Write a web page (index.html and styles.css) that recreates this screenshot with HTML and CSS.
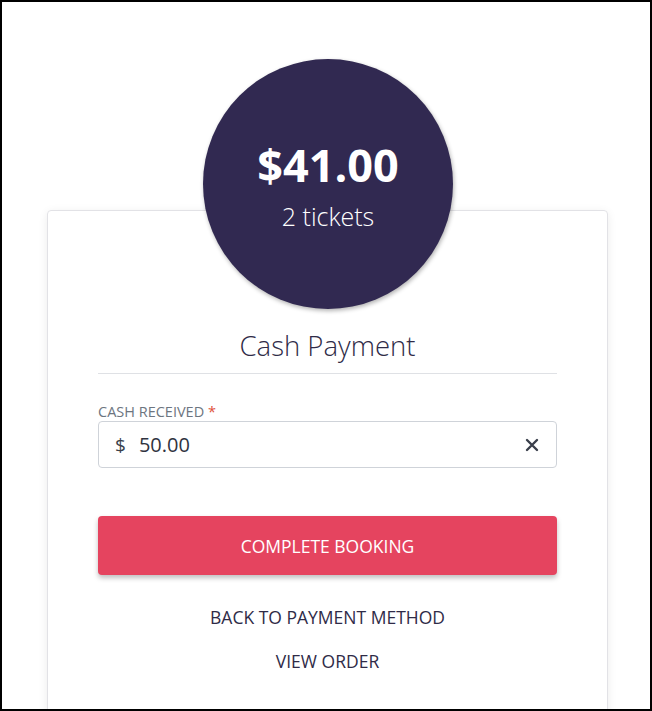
FILE: index.html
```html
<!DOCTYPE html>
<html lang="en">
<head>
    <meta charset="UTF-8">
    <meta name="viewport" content="width=device-width, initial-scale=1.0">
    <title>Cash Payment</title>
    <link rel="stylesheet" href="styles.css">
</head>
<body>
    <div class="frame">
        <div class="total-badge">
            <div class="total-amount">$41.00</div>
            <div class="total-count">2 tickets</div>
        </div>
        <div class="payment-card">
            <h2 class="payment-title">Cash Payment</h2>
            <label class="field-label" for="cash_received">Cash Received <span class="required">*</span></label>
            <div class="field-box">
                <span class="field-prefix">$</span>
                <input type="text" id="cash_received" value="50.00">
                <button class="field-clear" aria-label="Clear">
                    <svg width="14" height="14" viewBox="0 0 14 14"><path d="M2 2 L12 12 M12 2 L2 12" stroke="#3a3f4b" stroke-width="2.4" stroke-linecap="round"/></svg>
                </button>
            </div>
            <button class="primary-btn">Complete Booking</button>
            <a class="text-link" href="#">Back to Payment Method</a>
            <a class="text-link" href="#">View Order</a>
        </div>
    </div>
</body>
</html>
```

FILE: styles.css
```css
body {
    margin: 0;
    font-family: 'Open Sans', sans-serif;
    background-color: #fff;
    color: #2f2b47;
}
.frame {
    height: 711px;
    box-sizing: border-box;
    border: 2px solid #000;
    overflow: hidden;
    padding-top: 57px;
}
.total-badge {
    position: relative;
    z-index: 1;
    width: 250px;
    height: 250px;
    box-sizing: border-box;
    padding-top: 78px;
    border-radius: 50%;
    background-color: #312951;
    box-shadow: 1px 2px 4px rgba(0, 0, 0, 0.3);
    margin: 0 0 -99px 201px;
    display: flex;
    flex-direction: column;
    align-items: center;
    color: #fff;
}
.total-amount {
    font-size: 45px;
    font-weight: 700;
    line-height: 56px;
}
.total-count {
    font-size: 25px;
    font-weight: 300;
    line-height: 34px;
    margin-top: 6px;
}
.payment-card {
    width: 561px;
    height: 560px;
    box-sizing: border-box;
    margin-left: 45px;
    border: 1px solid #e2e2e6;
    border-radius: 4px;
    box-shadow: 0 2px 10px rgba(0, 0, 0, 0.08);
    padding: 116px 50px 0;
    display: flex;
    flex-direction: column;
}
.payment-title {
    margin: 0 0 28px;
    font-size: 27.5px;
    font-weight: 300;
    line-height: 38px;
    text-align: center;
    padding-bottom: 8px;
    border-bottom: 1px solid #dfe1e5;
    color: #2f2b47;
}
.field-label {
    font-size: 14.5px;
    line-height: 19px;
    text-transform: uppercase;
    color: #6d7580;
}
.required {
    color: #e0503a;
}
.field-box {
    display: flex;
    align-items: center;
    height: 47px;
    box-sizing: border-box;
    border: 1px solid #cfd3d9;
    border-radius: 4px;
    padding: 0 14px 0 16px;
    margin-bottom: 48px;
}
.field-prefix {
    font-size: 19px;
    color: #3a3f4b;
    margin-right: 13px;
}
.field-box input {
    flex: 1;
    border: none;
    outline: none;
    font-family: inherit;
    font-size: 20px;
    color: #2f3340;
    padding: 0;
    background: transparent;
}
.field-clear {
    border: none;
    background: none;
    padding: 0;
    width: 20px;
    height: 20px;
    display: flex;
    align-items: center;
    justify-content: center;
    cursor: pointer;
}
.primary-btn {
    height: 59px;
    border: none;
    border-radius: 4px;
    background-color: #e5445f;
    color: #fff;
    font-family: inherit;
    font-size: 17.5px;
    text-transform: uppercase;
    box-shadow: 0 3px 5px rgba(0, 0, 0, 0.25);
    cursor: pointer;
    margin-bottom: 30px;
}
.text-link {
    display: block;
    text-align: center;
    font-size: 17.5px;
    line-height: 24px;
    text-transform: uppercase;
    text-decoration: none;
    color: #2f2b47;
    margin-bottom: 20px;
}
```
